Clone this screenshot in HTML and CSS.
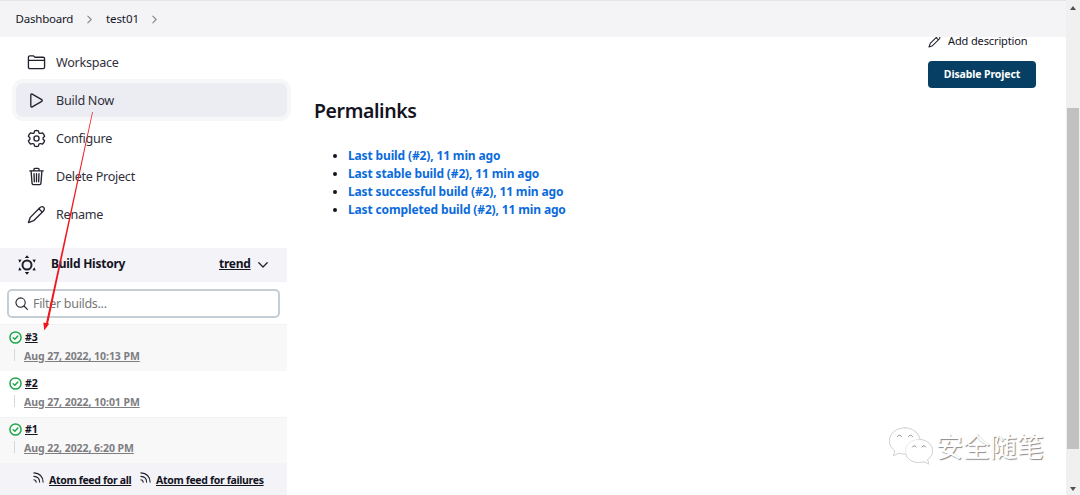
FILE: index.html
```html
<!DOCTYPE html>
<html lang="en">

<head>
    <meta charset="UTF-8">
    <meta name="viewport" content="width=device-width, initial-scale=1.0">
    <title>test01 [Jenkins]</title>
    <link rel="stylesheet" href="styles.css">
</head>

<body>

    <div class="page">
        <!-- Breadcrumbs -->
        <header class="breadcrumbs">
            <a class="crumb crumb-home">Dashboard</a>
            <svg class="crumb-arrow" viewBox="0 0 6 10"><path d="M1 1l4 4-4 4" /></svg>
            <a class="crumb crumb-job">test01</a>
            <svg class="crumb-arrow" viewBox="0 0 6 10"><path d="M1 1l4 4-4 4" /></svg>
        </header>

        <div class="columns">
            <aside class="side-panel">
                <!-- Tasks -->
                <nav class="tasks">
                    <a class="task">
                        <svg class="icon" viewBox="0 0 20 20"><path d="M1.5 15V4.500A1.500 1.500 0 0 1 3 3H6.600L8.400 4.500H17A1.500 1.500 0 0 1 18.500 6V15A1.500 1.500 0 0 1 17 16.500H3A1.500 1.500 0 0 1 1.500 15zM1.500 7.800H18.500" /></svg>
                        <span>Workspace</span>
                    </a>
                    <a class="task active">
                        <svg class="icon" viewBox="0 0 20 20"><path d="M4 4.200v11.600a1 1 0 0 0 1.500.9l10-5.800a1 1 0 0 0 0-1.800l-10-5.800a1 1 0 0 0-1.500.9z" /></svg>
                        <span>Build Now</span>
                    </a>
                    <a class="task">
                        <svg class="icon" viewBox="0 0 20 20"><path d="M8 2Q10 1.200 12 2L12.600 4.200Q13.300 4.800 14.300 4.600L16.200 4.100Q18 5.500 18.500 7.600L17 9.200Q16.700 10 17 10.800L18.500 12.400Q18 14.500 16.200 15.900L14.300 15.400Q13.300 15.200 12.600 15.800L12 18Q10 18.800 8 18L7.400 15.800Q6.700 15.200 5.700 15.400L3.800 15.900Q2 14.500 1.500 12.400L3 10.800Q3.300 10 3 9.200L1.500 7.600Q2 5.500 3.800 4.100L5.700 4.600Q6.700 4.800 7.400 4.200z" /><circle cx="10" cy="10" r="2.700" /></svg>
                        <span>Configure</span>
                    </a>
                    <a class="task">
                        <svg class="icon" viewBox="0 0 20 20"><path d="M2.900 4H17.100M4.300 4L5.300 17Q5.400 18.500 6.700 18.500H13.300Q14.600 18.500 14.700 17L15.700 4M7.300 4V2.500Q7.300 1.500 8.300 1.500H11.700Q12.700 1.500 12.700 2.500V4M10 7V15.500M7.400 7L7.700 15.500M12.600 7L12.300 15.500" /></svg>
                        <span>Delete Project</span>
                    </a>
                    <a class="task">
                        <svg class="icon" viewBox="0 0 20 20"><path d="M13.200 3.200Q15.500.8 17.600 2.400Q19.200 4.500 16.800 6.800L7 16.500L1.500 18.500L3.500 13zM12.500 4L16 7.500" /></svg>
                        <span>Rename</span>
                    </a>
                </nav>

                <!-- Build history -->
                <section class="history">
                    <div class="history-header">
                        <svg class="weather" viewBox="0 0 20 20">
                            <circle cx="10" cy="10" r="4.500" />
                            <path d="M10 .3l2.200 2.700H7.800zM10 19.700l2.200-2.700H7.800zM1.300 4.500l3.300.3-2 2.900zM18.700 4.500l-3.300.3 2 2.900zM1.300 15.500l3.300-.3-2-2.900zM18.700 15.500l-3.300-.3 2-2.900z" />
                        </svg>
                        <span class="history-title">Build History</span>
                        <a class="trend">trend</a>
                        <svg class="chevron" viewBox="0 0 10 6"><path d="M.8.8L5 5 9.200.8" /></svg>
                    </div>
                    <div class="search">
                        <svg class="search-icon" viewBox="0 0 14 14"><circle cx="6" cy="6" r="5" /><path d="M9.700 9.700L13.300 13.300" /></svg>
                        <span class="placeholder">Filter builds...</span>
                    </div>
                    <div class="build odd">
                        <div class="build-name">
                            <svg class="ball" viewBox="0 0 14 14"><circle cx="7" cy="7" r="6" /><path d="M4.500 7.300l1.800 1.600 3.200-3.500" /></svg>
                            <a>#3</a>
                        </div>
                        <div class="build-date"><a>Aug 27, 2022, 10:13 PM</a></div>
                    </div>
                    <div class="build">
                        <div class="build-name">
                            <svg class="ball" viewBox="0 0 14 14"><circle cx="7" cy="7" r="6" /><path d="M4.500 7.300l1.800 1.600 3.200-3.500" /></svg>
                            <a>#2</a>
                        </div>
                        <div class="build-date"><a>Aug 27, 2022, 10:01 PM</a></div>
                    </div>
                    <div class="build odd last">
                        <div class="build-name">
                            <svg class="ball" viewBox="0 0 14 14"><circle cx="7" cy="7" r="6" /><path d="M4.500 7.300l1.800 1.600 3.200-3.500" /></svg>
                            <a>#1</a>
                        </div>
                        <div class="build-date"><a>Aug 22, 2022, 6:20 PM</a></div>
                    </div>
                    <div class="feeds">
                        <svg class="rss" viewBox="0 0 12 12"><path d="M1 1Q10.500 1.500 11 11M1 4.800Q7 5 7.200 11M1 8.500Q3.300 8.700 3.500 11" /></svg>
                        <a class="feed-all">Atom feed for all</a>
                        <svg class="rss" viewBox="0 0 12 12"><path d="M1 1Q10.500 1.500 11 11M1 4.800Q7 5 7.200 11M1 8.500Q3.300 8.700 3.500 11" /></svg>
                        <a class="feed-failures">Atom feed for failures</a>
                    </div>
                </section>
            </aside>

            <main class="main-panel">
                <h2>Permalinks</h2>
                <ul class="permalinks">
                    <li><a>Last build (#2), 11 min ago</a></li>
                    <li><a>Last stable build (#2), 11 min ago</a></li>
                    <li><a>Last successful build (#2), 11 min ago</a></li>
                    <li><a>Last completed build (#2), 11 min ago</a></li>
                </ul>
            </main>

            <div class="actions">
                <a class="description">
                    <svg class="pencil" viewBox="0 0 20 20"><path d="M13.200 3.200Q15.500.8 17.600 2.400Q19.200 4.500 16.800 6.800L7 16.500L1.500 18.500L3.500 13zM12.500 4L16 7.500" /></svg>
                    <span>Add description</span>
                </a>
                <button class="disable">Disable Project</button>
            </div>
        </div>
    </div>

    <!-- Scrollbar -->
    <div class="scrollbar">
        <svg class="scroll-arrow" viewBox="0 0 6 4"><path d="M0 4L3 0l3 4z" /></svg>
        <div class="thumb"></div>
        <svg class="scroll-arrow" viewBox="0 0 6 4"><path d="M0 0l3 4 3-4z" /></svg>
    </div>

    <!-- Arrow from Build Now to the new build -->
    <svg class="pointer" viewBox="0 0 60 225">
        <path d="M52.200 1L52.900 1L7.800 214L5.700 213.600z" />
        <path d="M4.300 219.500L3.300 211.500L9.200 212.700z" />
    </svg>

    <!-- Watermark -->
    <div class="watermark">
        <svg class="wechat" viewBox="0 0 46 38">
            <path d="M17 1C8 1 1.500 6.500 1.500 14c0 4 2 7.500 5.500 10L5.500 28.500 11 26q3 1 6.500 1C26 27 32 21 32 14S25.500 1 17 1z" />
            <path d="M31 12.500c-8 0-13.500 5-13.500 11.500S23 35.500 31 35.500q2.500 0 5-1L40.500 37 39.500 32.500C42.500 30.500 44.500 27.500 44.500 24c0-6.500-6-11.500-13.500-11.500z" />
            <path class="eyes" d="M9.500 9.500q2-3 4 0M20.500 9.500q2-3 4 0M24.500 20q1.800-2.800 3.600 0M34 20q1.800-2.800 3.600 0" />
        </svg>
        <span>安全随笔</span>
    </div>

</body>

</html>
```
FILE: styles.css
```css
body {
    margin: 0;
    height: 495px;
    display: flex;
    overflow: hidden;
    position: relative;
    background-color: #fff;
    color: #14141f;
    font-family: "Noto Sans", "Open Sans", sans-serif;
    font-size: 12px;
}

svg {
    display: block;
    flex: none;
    fill: none;
    stroke: #22222e;
    stroke-linecap: round;
    stroke-linejoin: round;
}

a,
span {
    white-space: nowrap;
}

.page {
    width: 1066px;
    flex: none;
}

/* Breadcrumbs */
.breadcrumbs {
    box-sizing: border-box;
    height: 37px;
    display: flex;
    align-items: center;
    position: relative;
    z-index: 1;
    padding-left: 15px;
    border-top: 1px solid #e4e4e8;
    background-color: #f4f4f7;
    font-size: 11.5px;
    letter-spacing: -0.2px;
}

.crumb {
    padding-bottom: 1px;
}

.crumb-home {
    width: 71.5px;
    padding-left: 0.5px;
}

.crumb-job {
    width: 46px;
    margin-left: 14px;
    letter-spacing: -0.1px;
}

.crumb-arrow {
    width: 5px;
    height: 9px;
    stroke: #85858d;
    stroke-width: 1.3;
}

.columns {
    display: flex;
    height: 458px;
}

/* Side panel */
.side-panel {
    width: 287px;
    flex: none;
}

.tasks {
    display: flex;
    flex-direction: column;
    gap: 4px;
    height: 203px;
    padding: 8px 0 0 16px;
}

.task {
    display: flex;
    align-items: center;
    gap: 10.5px;
    height: 34px;
    padding-left: 10.5px;
    border-radius: 7px;
    color: #30303c;
    font-size: 12.6px;
    letter-spacing: -0.27px;
}

.task span {
    padding-top: 1px;
}

.task.active {
    background-color: #ecedf3;
    box-shadow: 0 0 0 4px #f7f7fa;
}

.icon {
    width: 19px;
    height: 19px;
    stroke-width: 1.4;
}

/* Build history */
.history-header {
    box-sizing: border-box;
    height: 34px;
    display: flex;
    align-items: center;
    padding-left: 17px;
    background-color: #f3f3f8;
    font-weight: 700;
    letter-spacing: -0.25px;
}

.weather {
    width: 20px;
    height: 20px;
    margin-right: 14px;
    stroke-width: 2;
}

.weather path {
    fill: #14141f;
    stroke: none;
}

.history-title {
    width: 168px;
    padding-bottom: 3px;
}

.trend {
    width: 39px;
    padding-bottom: 3px;
    text-decoration: underline;
}

.chevron {
    width: 10px;
    height: 6px;
    stroke-width: 1.3;
}

.search {
    box-sizing: border-box;
    width: 273px;
    height: 29px;
    display: flex;
    align-items: center;
    gap: 5px;
    margin: 7px 0 6px 7px;
    padding-left: 6px;
    border: 2px solid #c5ced4;
    border-radius: 5px;
    color: #777;
    font-size: 12.5px;
    letter-spacing: -0.3px;
}

.search-icon {
    width: 13px;
    height: 13px;
    stroke-width: 1.2;
}

.build {
    box-sizing: border-box;
    height: 46px;
    padding: 2px 0 0 9px;
    font-size: 10.5px;
    font-weight: 700;
    letter-spacing: -0.06px;
}

.build.odd {
    height: 47px;
    background-color: #f8f8f8;
    border-top: 1px solid #f1f2f4;
}

.build.odd.last {
    height: 46px;
    padding-top: 1px;
}

.build a,
.feeds a {
    text-decoration: underline;
}

.build a {
    padding-top: 2px;
}

.build-name {
    display: flex;
    align-items: center;
    gap: 3px;
    height: 18px;
}

.ball {
    width: 13px;
    height: 13px;
    margin-top: 2px;
    stroke: #1ea64b;
    stroke-width: 1.6;
}

.build-date {
    display: flex;
    align-items: center;
    height: 12px;
    margin: 4px 0 0 5px;
    padding-left: 9px;
    border-left: 1px solid #d3d9de;
    color: #7d7d82;
}

.feeds {
    display: flex;
    align-items: center;
    height: 33px;
    padding-left: 33px;
    background-color: #f3f3f8;
    font-size: 10.5px;
    font-weight: 700;
    letter-spacing: -0.33px;
}

.rss {
    width: 11px;
    height: 11px;
    margin: 0 5px 4px 0;
    stroke-width: 1.2;
}

.feed-all {
    width: 91px;
}

/* Main panel */
.main-panel {
    width: 614px;
    padding-left: 27px;
}

h2 {
    margin: 60px 0 22px;
    font-size: 19.5px;
    font-weight: 600;
    line-height: 28px;
    letter-spacing: -0.4px;
}

.permalinks {
    margin: 0;
    padding-left: 34px;
    line-height: 17.9px;
    font-size: 12px;
    font-weight: 700;
    letter-spacing: -0.14px;
}

.permalinks a {
    color: #0b6bdb;
}

/* Project actions */
.actions {
    width: 108px;
}

.description {
    display: flex;
    align-items: center;
    gap: 7px;
    height: 24px;
    margin-top: -8px;
    font-size: 11px;
    line-height: 12px;
    letter-spacing: -0.12px;
}

.pencil {
    width: 13px;
    height: 13px;
    stroke-width: 1.6;
}

.disable {
    display: block;
    width: 108px;
    height: 27px;
    margin-top: 8px;
    padding: 0 0 1px;
    border: none;
    border-radius: 4px;
    background-color: #063f63;
    color: #fff;
    font-family: inherit;
    font-size: 10.5px;
    font-weight: 700;
    letter-spacing: -0.12px;
}

/* Scrollbar */
.scrollbar {
    box-sizing: border-box;
    width: 14px;
    flex: none;
    display: flex;
    flex-direction: column;
    align-items: center;
    justify-content: space-between;
    padding: 6px 0 4px;
    background-color: #f0f0f0;
}

.scroll-arrow {
    width: 6px;
    height: 4px;
    fill: #505050;
    stroke: none;
}

.thumb {
    width: 12px;
    height: 341px;
    margin-top: 59px;
    background-color: #c1c1c1;
}

/* Overlays */
.pointer {
    position: absolute;
    left: 40px;
    top: 111px;
    width: 60px;
    height: 225px;
    stroke: none;
    fill: #f0161d;
}

.watermark {
    position: absolute;
    left: 888px;
    top: 427px;
    display: flex;
    align-items: center;
    gap: 2px;
    color: #fff;
    font-family: "Noto Sans CJK SC", sans-serif;
    font-size: 27px;
    line-height: 38px;
    text-shadow: 1px 1px 1px #8a8a8a;
}

.wechat {
    width: 46px;
    height: 38px;
    fill: #fff;
    stroke: #d8d8d8;
    stroke-width: 0.6;
    filter: drop-shadow(0.5px 0.7px 0.4px #999);
}

.eyes {
    fill: none;
    stroke: #888;
    stroke-width: 1;
}
```
